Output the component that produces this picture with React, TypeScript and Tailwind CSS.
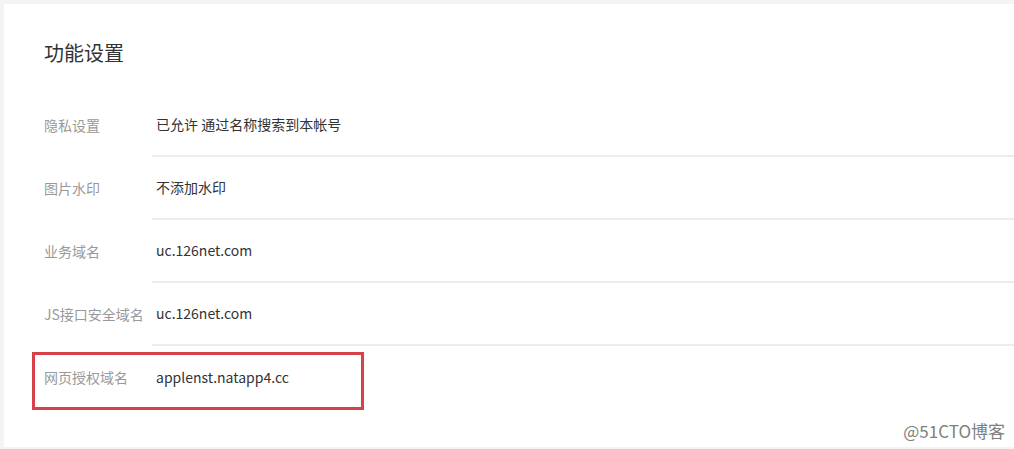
const rows = [
  { label: '隐私设置', value: '已允许 通过名称搜索到本帐号' },
  { label: '图片水印', value: '不添加水印' },
  { label: '业务域名', value: 'uc.126net.com' },
  { label: 'JS接口安全域名', value: 'uc.126net.com' },
  { label: '网页授权域名', value: 'applenst.natapp4.cc', marked: true },
]

export default function App() {
  return (
    <div
      className="relative h-[449px] w-[1014px] overflow-hidden bg-[#f4f4f4] pl-[4px] pt-[4px]"
      style={{ fontFamily: '"Microsoft YaHei", "Noto Sans CJK SC", "Noto Sans", sans-serif' }}
    >
      <div className="h-[443px] bg-white pl-[40px]">
        {/* Title */}
        <div className="flex h-[90px] items-center pt-[8px] text-[20px] text-[#333]">功能设置</div>

        {/* Setting rows */}
        {rows.map((row, i) => (
          <div key={i} className="relative flex h-[63px] text-[14px]">
            <div className="flex w-[108px] shrink-0 items-center text-[#999]">{row.label}</div>
            <div
              className={
                'flex flex-1 items-center pl-[4px] text-[#333] ' +
                (i < rows.length - 1 ? 'border-b-2 border-[#ececec]' : '')
              }
            >
              {row.value}
            </div>
            {row.marked && (
              <div className="absolute left-[-12px] top-[6px] h-[58px] w-[332px] border-[3px] border-[#d6424a]" />
            )}
          </div>
        ))}
      </div>

      {/* Watermark */}
      <div className="absolute bottom-[6px] right-[9px] text-[17px] text-[#808080] [text-shadow:0_0_2px_#fff]">
        @51CTO博客
      </div>
    </div>
  )
}
